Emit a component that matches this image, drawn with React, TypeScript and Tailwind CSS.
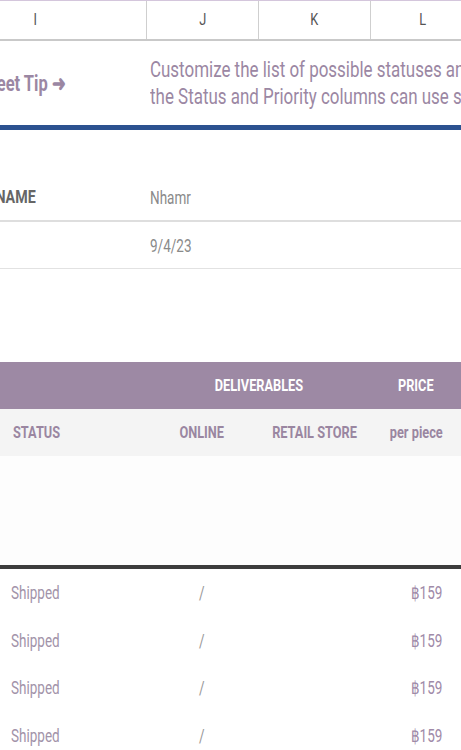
import * as React from "react";

type Align = "left" | "center" | "right";

// narrow text: the sheet renders in a condensed face, squeeze Roboto to match
function N({ children, align = "left", className = "" }: { children: React.ReactNode; align?: Align; className?: string }) {
  const origin = align === "left" ? "origin-left" : align === "right" ? "origin-right" : "origin-center";
  return <span className={`inline-block whitespace-nowrap scale-x-[0.75] ${origin} ${className}`}>{children}</span>;
}

const rows = [1, 2, 3, 4];

export default function App() {
  return (
    <div className="w-[461px] h-[750px] overflow-hidden bg-white font-['Roboto',sans-serif]">
      {/* column letters */}
      <div className="flex h-[41px] border-t border-[#d4c6dc] border-b-2 border-b-[#c9c9c9] text-[17px] text-[#555]">
        <div className="w-[147px] shrink-0 flex items-center justify-end pr-[108px] border-r border-[#cfcfcf]">
          <N align="center">I</N>
        </div>
        <div className="w-[112px] shrink-0 flex items-center justify-center border-r border-[#cfcfcf]">
          <N align="center">J</N>
        </div>
        <div className="w-[112px] shrink-0 flex items-center justify-center border-r border-[#cfcfcf]">
          <N align="center">K</N>
        </div>
        <div className="w-[112px] shrink-0 flex items-center justify-center pr-[8px]">
          <N align="center">L</N>
        </div>
      </div>

      {/* tip row */}
      <div className="flex h-[84px] items-center">
        <div className="w-[147px] shrink-0 flex justify-end pr-[82px] text-[22px] font-bold text-[#9b87a3]">
          <N align="right">Sheet Tip ➜</N>
        </div>
        <div className="pl-[3px] text-[22.6px] leading-[27px] text-[#9b87a3]">
          <div>
            <N>Customize the list of possible statuses and priorities</N>
          </div>
          <div>
            <N>the Status and Priority columns can use shared values</N>
          </div>
        </div>
      </div>
      <div className="h-[5px] bg-[#2c5290]" />

      {/* name / date */}
      <div className="mt-[45px] flex h-[47px] items-center border-b-2 border-[#dedede]">
        <div className="w-[147px] shrink-0 flex justify-end pr-[111px] text-[19px] font-bold text-[#666]">
          <N align="right">NAME</N>
        </div>
        <div className="pl-[3px] text-[18px] text-[#8a8a8a]">
          <N>Nhamr</N>
        </div>
      </div>
      <div className="flex h-[47px] items-center border-b border-[#e2e2e2]">
        <div className="w-[147px] shrink-0" />
        <div className="pl-[3px] text-[18px] text-[#8a8a8a]">
          <N>9/4/23</N>
        </div>
      </div>

      {/* table header */}
      <div className="mt-[93px] flex h-[47px] items-center bg-[#9d89a4] text-[17px] font-bold text-white">
        <div className="w-[147px] shrink-0" />
        <div className="w-[224px] shrink-0 flex justify-center">
          <N align="center">DELIVERABLES</N>
        </div>
        <div className="w-[100px] shrink-0 flex justify-center pr-[10px]">
          <N align="center">PRICE</N>
        </div>
      </div>
      <div className="flex h-[47px] items-center bg-[#f4f4f4] text-[17px] font-bold text-[#9a86a1]">
        <div className="w-[147px] shrink-0 pl-[13px]">
          <N>STATUS</N>
        </div>
        <div className="w-[112px] shrink-0 flex justify-center pr-[2px]">
          <N align="center">ONLINE</N>
        </div>
        <div className="w-[112px] shrink-0 flex justify-center">
          <N align="center">RETAIL STORE</N>
        </div>
        <div className="w-[100px] shrink-0 flex justify-center pr-[10px]">
          <N align="center">per piece</N>
        </div>
      </div>

      <div className="h-[109px] bg-[#fdfdfd]" />
      <div className="h-[4px] bg-[#3d3d3d]" />

      {rows.map((r) => (
        <div key={r} className="flex h-[47.5px] items-center text-[18px]">
          <div className="w-[147px] shrink-0 pl-[11px] text-[#a293a9]">
            <N>Shipped</N>
          </div>
          <div className="w-[112px] shrink-0 flex justify-center pr-[2px] text-[#999]">
            <N align="center">/</N>
          </div>
          <div className="w-[112px] shrink-0" />
          <div className="w-[71px] shrink-0 flex justify-end text-[#a08aa8]">
            <N align="right">฿159</N>
          </div>
        </div>
      ))}
    </div>
  );
}
